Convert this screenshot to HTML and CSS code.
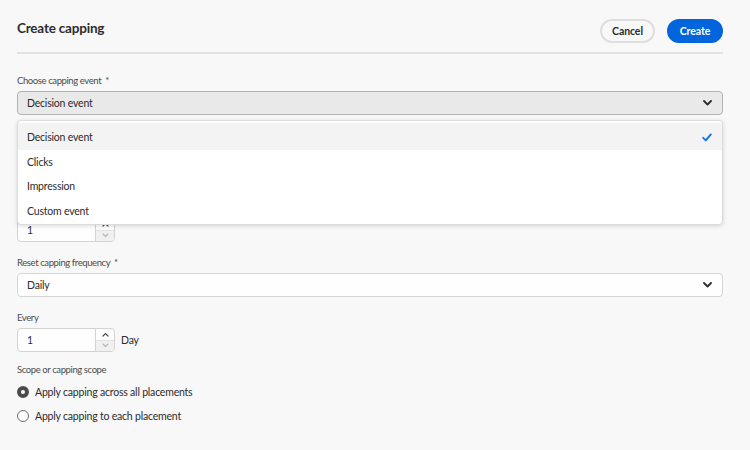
FILE: index.html
```html
<!DOCTYPE html>
<html lang="en">
<head>
<meta charset="utf-8">
<title>Create capping</title>
<link rel="stylesheet" href="styles.css">
</head>
<body>
<div class="page">
  <header class="header">
    <h1 class="title">Create capping</h1>
    <div class="actions">
      <button class="btn btn-secondary">Cancel</button>
      <button class="btn btn-primary">Create</button>
    </div>
  </header>
  <div class="divider"></div>

  <form class="form">
    <div class="field field-first">
      <label class="label">Choose capping event <span class="req">*</span></label>
      <div class="picker-wrap">
        <div class="picker picker-open">
          <span class="picker-value">Decision event</span>
          <svg class="chevron" width="9" height="6" viewBox="0 0 9 6"><path d="M1 1 L4.5 4.5 L8 1" fill="none" stroke="#2c2c2c" stroke-width="1.8" stroke-linecap="round" stroke-linejoin="round"/></svg>
        </div>
        <ul class="popover">
          <li class="option option-selected">
            <span>Decision event</span>
            <svg class="check" width="10" height="9" viewBox="0 0 10 9"><path d="M1.2 4.8 L3.8 7.4 L8.8 1.4" fill="none" stroke="#1473e6" stroke-width="1.9" stroke-linecap="round" stroke-linejoin="round"/></svg>
          </li>
          <li class="option">Clicks</li>
          <li class="option">Impression</li>
          <li class="option">Custom event</li>
        </ul>
      </div>
    </div>

    <div class="field field-hidden">
      <div class="number">
        <span class="number-value">1</span>
        <div class="stepper">
          <span class="step step-up"><svg width="7" height="5" viewBox="0 0 7 5"><path d="M1 4 L3.5 1.5 L6 4" fill="none" stroke="#4b4b4b" stroke-width="1.2" stroke-linecap="round"/></svg></span>
          <span class="step step-down"><svg width="7" height="5" viewBox="0 0 7 5"><path d="M1 1 L3.5 3.5 L6 1" fill="none" stroke="#b3b3b3" stroke-width="1.1" stroke-linecap="round"/></svg></span>
        </div>
      </div>
    </div>

    <div class="field">
      <label class="label">Reset capping frequency <span class="req">*</span></label>
      <div class="picker">
        <span class="picker-value">Daily</span>
        <svg class="chevron" width="9" height="6" viewBox="0 0 9 6"><path d="M1 1 L4.5 4.5 L8 1" fill="none" stroke="#2c2c2c" stroke-width="1.8" stroke-linecap="round" stroke-linejoin="round"/></svg>
      </div>
    </div>

    <div class="field">
      <label class="label">Every</label>
      <div class="inline">
        <div class="number">
          <span class="number-value">1</span>
          <div class="stepper">
            <span class="step step-up"><svg width="7" height="5" viewBox="0 0 7 5"><path d="M1 4 L3.5 1.5 L6 4" fill="none" stroke="#4b4b4b" stroke-width="1.2" stroke-linecap="round"/></svg></span>
            <span class="step step-down"><svg width="7" height="5" viewBox="0 0 7 5"><path d="M1 1 L3.5 3.5 L6 1" fill="none" stroke="#b3b3b3" stroke-width="1.1" stroke-linecap="round"/></svg></span>
          </div>
        </div>
        <span class="unit">Day</span>
      </div>
    </div>

    <div class="field field-scope">
      <label class="label">Scope or capping scope</label>
      <div class="radio-row">
        <span class="radio radio-checked"></span>
        <span class="radio-label">Apply capping across all placements</span>
      </div>
      <div class="radio-row">
        <span class="radio"></span>
        <span class="radio-label">Apply capping to each placement</span>
      </div>
    </div>
  </form>
</div>
</body>
</html>
```

FILE: styles.css
```css
* { box-sizing: border-box; }

html, body {
  margin: 0;
  padding: 0;
  background: #f8f8f8;
  font-family: Lato, "Open Sans", "Liberation Sans", sans-serif;
  color: #2c2c2c;
}

.page {
  padding: 0 27px 0 17px;
}

.header {
  display: flex;
  justify-content: space-between;
  align-items: flex-start;
  padding-top: 19px;
}

.title {
  margin: 0;
  font-size: 13.5px;
  letter-spacing: -0.2px;
  line-height: 18px;
  font-weight: 700;
  color: #2c2c2c;
}

.actions {
  display: flex;
  gap: 12px;
}

.btn {
  height: 24px;
  border-radius: 12px;
  font-family: inherit;
  font-size: 10.5px;
  letter-spacing: -0.1px;
  font-weight: 700;
  padding: 0;
  cursor: pointer;
  line-height: 20px;
}

.btn-secondary {
  background: #f8f8f8;
  border: 2px solid #dedede;
  color: #2c2c2c;
  width: 55px;
}

.btn-primary {
  background: #0265dc;
  border: 2px solid #0265dc;
  color: #ffffff;
  width: 56px;
}

.divider {
  height: 2px;
  background: #e2e2e2;
  margin-top: 9px;
}

.form {
  padding-top: 20px;
}

.field {
  margin-top: 14px;
}

.field-first {
  margin-top: 0;
}

.field-hidden {
  margin-top: 103px;
}

.field-scope {
  margin-top: 11px;
}

.label {
  display: block;
  height: 14px;
  font-size: 9.5px;
  letter-spacing: -0.4px;
  line-height: 14px;
  color: #4b4b4b;
  margin-bottom: 3px;
}

.req {
  margin-left: 2px;
}

.picker-wrap {
  position: relative;
}

.picker {
  height: 24px;
  border: 1px solid #d6d6d6;
  border-radius: 4px;
  background: #fefefe;
  display: flex;
  align-items: center;
  justify-content: space-between;
  padding: 0 10px 0 9px;
}

.picker-open {
  background: #e9e9e9;
  border-color: #b3b3b3;
}

.picker-value {
  font-size: 10.5px;
  letter-spacing: -0.2px;
  color: #2c2c2c;
}

.chevron {
  display: block;
}

.popover {
  position: absolute;
  left: 0;
  right: 0;
  top: 29px;
  margin: 0;
  padding: 2px 0 1px;
  list-style: none;
  background: #ffffff;
  border: 1px solid #dcdcdc;
  border-radius: 4px;
  box-shadow: 0 1px 4px rgba(0, 0, 0, 0.15);
  z-index: 10;
}

.option {
  height: 24.5px;
  display: flex;
  align-items: center;
  justify-content: space-between;
  padding: 0 10px 0 9px;
  font-size: 10.5px;
  letter-spacing: -0.2px;
  color: #2c2c2c;
}

.option-selected {
  background: #f3f3f3;
  height: 26.5px;
  padding-top: 2px;
}

.check {
  display: block;
}

.inline {
  display: flex;
  align-items: center;
}

.number {
  width: 98px;
  height: 24px;
  display: flex;
  border: 1px solid #d3d3d3;
  border-radius: 4px;
  background: #fefefe;
  overflow: hidden;
}

.number-value {
  flex: 1;
  font-size: 10.5px;
  line-height: 22px;
  padding-left: 9px;
  color: #2c2c2c;
}

.stepper {
  width: 19px;
  border-left: 1px solid #d3d3d3;
  display: flex;
  flex-direction: column;
}

.step {
  flex: 1;
  display: flex;
  align-items: center;
  justify-content: center;
}

.step svg { display: block; }

.step-down {
  background: #f0f0f0;
  border-top: 1px solid #e2e2e2;
}

.unit {
  font-size: 10.5px;
  letter-spacing: -0.2px;
  margin-left: 6px;
  color: #2c2c2c;
}

.radio-row {
  height: 24px;
  display: flex;
  align-items: center;
}

.radio {
  width: 12px;
  height: 12px;
  border-radius: 50%;
  border: 1.5px solid #6d6d6d;
  background: #ffffff;
  margin-right: 6px;
  flex: none;
}

.radio-checked {
  border: 4px solid #4b4b4b;
}

.radio-label {
  font-size: 10.5px;
  letter-spacing: -0.2px;
  color: #2c2c2c;
}
```
